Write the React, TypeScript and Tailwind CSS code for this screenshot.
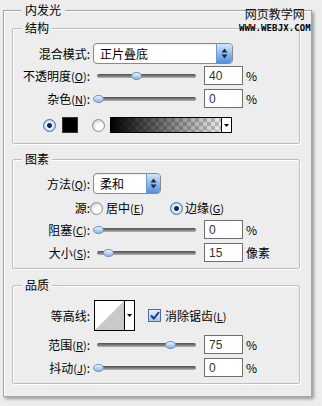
import React from "react";

const panelBg = "bg-[#ededed]";

function Group({
  title,
  className,
  children,
}: {
  title: string;
  className: string;
  children: React.ReactNode;
}) {
  return (
    <fieldset
      className={`w-[288px] border border-[#bdbdbd] rounded-[2px] shadow-[inset_1px_1px_0_#fff,1px_1px_0_#fff] flex flex-col ${className}`}
    >
      <legend className={`ml-[9px] px-[3px] ${panelBg}`}>{title}</legend>
      {children}
    </fieldset>
  );
}

function Label({ children }: { children: React.ReactNode }) {
  return <div className="w-[77px] shrink-0 text-right whitespace-nowrap">{children}</div>;
}

function Key({ k }: { k: string }) {
  return (
    <span className="text-[11px]">
      (<u className="underline underline-offset-[1px]">{k}</u>)
    </span>
  );
}

function Spinner({ w }: { w: string }) {
  return (
    <div
      className={`${w} h-full rounded-r-[3px] bg-gradient-to-b from-[#d3e6fb] via-[#8dbbf0] to-[#4f8fe0] border-l border-[#6f9ad0] flex items-center justify-center`}
    >
      <svg width="7" height="11" viewBox="0 0 7 11">
        <path d="M3.5 0.5 L6.5 4.5 L0.5 4.5 Z" fill="#1c2a3e" />
        <path d="M3.5 10.5 L6.5 6.5 L0.5 6.5 Z" fill="#1c2a3e" />
      </svg>
    </div>
  );
}

function Select({ value, w, spin }: { value: string; w: string; spin: string }) {
  return (
    <div
      className={`${w} h-[21px] rounded-[4px] border border-[#8a8a8a] bg-white flex items-stretch shadow-[inset_0_1px_1px_rgba(0,0,0,0.08)]`}
    >
      <div className="flex-1 pl-[6px] flex items-center">{value}</div>
      <Spinner w={spin} />
    </div>
  );
}

function Slider({ handle }: { handle: string }) {
  return (
    <div className="relative w-[103px] h-[10px] shrink-0">
      <div className="absolute left-[4px] right-0 top-[3px] h-[4px] rounded-full bg-gradient-to-b from-[#4f4f4f] via-[#7a7a7a] to-[#b8b8b8]" />
      <div
        className={`absolute top-[1px] ${handle} w-[11px] h-[8px] rounded-[50%] border border-[#6f93c0] bg-gradient-to-b from-[#eef5fd] to-[#8fb3de]`}
      />
    </div>
  );
}

function NumBox({ value }: { value: string }) {
  return (
    <div className="ml-[8px] w-[39px] h-[19px] border border-[#6f6f6f] bg-white pl-[4px] flex items-center text-[#333] font-['Liberation_Sans',sans-serif] text-[12px]">
      {value}
    </div>
  );
}

function SliderRow({
  label,
  handle,
  value,
  unit,
  className,
}: {
  label: React.ReactNode;
  handle: string;
  value: string;
  unit: string;
  className: string;
}) {
  return (
    <div className={`flex items-center h-[19px] ${className}`}>
      <Label>{label}</Label>
      <div className="ml-[3px] flex items-center">
        <Slider handle={handle} />
        <NumBox value={value} />
        <span className="ml-[3px]">{unit}</span>
      </div>
    </div>
  );
}

function Radio({ on }: { on?: boolean }) {
  return on ? (
    <div className="w-[13px] h-[13px] shrink-0 rounded-full border border-[#4d73a3] bg-[radial-gradient(circle,#0d2b5c_0,#0d2b5c_2px,#f4f9ff_3px,#9fc2ea_6px)]" />
  ) : (
    <div className="w-[13px] h-[13px] shrink-0 rounded-full border border-[#8e8e8e] bg-[radial-gradient(circle_at_60%_65%,#ffffff_0,#ffffff_3px,#d6d6d6_7px)]" />
  );
}

function Arrow() {
  return (
    <div className="w-[10px] h-full border-l border-black bg-white flex items-center justify-center">
      <svg width="5" height="3" viewBox="0 0 5 3">
        <path d="M0 0 L5 0 L2.5 3 Z" fill="#000" />
      </svg>
    </div>
  );
}

function Check() {
  return (
    <div className="w-[13px] h-[13px] shrink-0 border border-[#4e6f9a] bg-gradient-to-b from-[#e6f0fb] to-[#a9c6e8] flex items-center justify-center">
      <svg width="10" height="9" viewBox="0 0 10 9">
        <path d="M1 4.5 L3.8 7.5 L9 1" stroke="#183a80" strokeWidth="2" fill="none" />
      </svg>
    </div>
  );
}

export default function App() {
  return (
    <div
      className={`relative w-[322px] h-[406px] overflow-hidden ${panelBg} pt-[3px] pl-[3px] text-[12px] leading-[14px] text-black font-['Noto_Sans_CJK_SC','Noto_Sans',sans-serif]`}
    >
      <fieldset className="w-[309px] h-[394px] border border-[#a6a6a6] shadow-[inset_1px_1px_0_#fff,2px_2px_3px_rgba(0,0,0,0.35)] pl-[8px] flex flex-col">
        <legend className={`ml-[9px] px-[4px] ${panelBg}`}>内发光</legend>

        <Group title="结构" className="mt-[4px] h-[123px]">
          <div className="mt-[8px] flex items-center h-[21px]">
            <Label>混合模式:</Label>
            <div className="ml-[3px]">
              <Select value="正片叠底" w="w-[140px]" spin="w-[16px]" />
            </div>
          </div>
          <SliderRow
            className="mt-[2px]"
            label={<>不透明度<Key k="O" />:</>}
            handle="left-[38px]"
            value="40"
            unit="%"
          />
          <SliderRow
            className="mt-[4px]"
            label={<>杂色<Key k="N" />:</>}
            handle="left-0"
            value="0"
            unit="%"
          />
          <div className="mt-[9px] h-[16px] flex items-center pl-[30px]">
            <Radio on />
            <div className="ml-[6px] w-[16px] h-[16px] bg-black border border-[#333]" />
            <div className="ml-[14px]">
              <Radio />
            </div>
            <div className="ml-[5px] w-[122px] h-[16px] border border-black flex">
              <div className="flex-1 bg-[conic-gradient(#bcbcbc_90deg,#ececec_90deg_180deg,#bcbcbc_180deg_270deg,#ececec_270deg)] bg-[length:8px_8px]">
                <div className="w-full h-full bg-gradient-to-r from-black to-transparent" />
              </div>
              <Arrow />
            </div>
          </div>
        </Group>

        <Group title="图素" className="mt-[8px] h-[117px]">
          <div className="mt-[7px] flex items-center h-[21px]">
            <Label>方法<Key k="Q" />:</Label>
            <div className="ml-[3px]">
              <Select value="柔和" w="w-[68px]" spin="w-[14px]" />
            </div>
          </div>
          <div className="mt-[7px] h-[14px] flex items-center">
            <Label>源:</Label>
            <Radio />
            <span className="ml-[3px]">居中<Key k="E" /></span>
            <div className="ml-[26px]">
              <Radio on />
            </div>
            <span className="ml-[2px]">边缘<Key k="G" /></span>
          </div>
          <SliderRow
            className="mt-[5px]"
            label={<>阻塞<Key k="C" />:</>}
            handle="left-0"
            value="0"
            unit="%"
          />
          <SliderRow
            className="mt-[4px]"
            label={<>大小<Key k="S" />:</>}
            handle="left-[10px]"
            value="15"
            unit="像素"
          />
        </Group>

        <Group title="品质" className="mt-[9px] h-[106px]">
          <div className="mt-[8px] h-[31px] flex items-center">
            <Label>等高线:</Label>
            <div className="ml-[4px] w-[41px] h-[31px] border border-black flex bg-white">
              <svg className="flex-1 h-full" viewBox="0 0 30 29" preserveAspectRatio="none">
                <polygon points="0,29 30,0 30,29" fill="#c9c9c9" />
              </svg>
              <Arrow />
            </div>
            <div className="ml-[13px]">
              <Check />
            </div>
            <span className="ml-[4px]">消除锯齿<Key k="L" /></span>
          </div>
          <SliderRow
            className="mt-[4px]"
            label={<>范围<Key k="R" />:</>}
            handle="left-[72px]"
            value="75"
            unit="%"
          />
          <SliderRow
            className="mt-[4px]"
            label={<>抖动<Key k="J" />:</>}
            handle="left-0"
            value="0"
            unit="%"
          />
        </Group>
      </fieldset>

      <div className="absolute left-[239px] top-[8px] flex flex-col items-center leading-none">
        <span className="text-[12px] text-[#111]">网页教学网</span>
        <span className="mt-[4px] font-['DejaVu_Sans_Mono',monospace] font-bold text-[9px] tracking-[0.1px] text-black">
          WWW.WEBJX.COM
        </span>
      </div>
    </div>
  );
}
